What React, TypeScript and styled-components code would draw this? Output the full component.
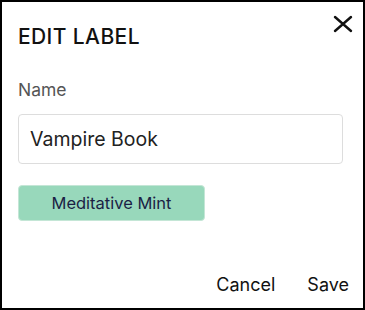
import styled, { createGlobalStyle } from "styled-components";

const GlobalStyle = createGlobalStyle`
  html, body {
    margin: 0;
    padding: 0;
    background: #ffffff;
  }
  * {
    box-sizing: border-box;
  }
`;

const Dialog = styled.div`
  position: relative;
  width: 365px;
  height: 310px;
  border: 2px solid #000000;
  background: #ffffff;
  font-family: Inter, "Noto Sans", sans-serif;
  padding: 22px 10px 8px 16px;
  display: flex;
  flex-direction: column;
`;

const Body = styled.div`
  display: flex;
  flex-direction: column;
  align-items: flex-start;
  padding-right: 10px;
`;

const Title = styled.h2`
  margin: 0;
  font-size: 21px;
  font-weight: 500;
  letter-spacing: 0.4px;
  line-height: 26px;
  color: #111111;
`;

const CloseButton = styled.button`
  position: absolute;
  top: 12px;
  right: 10px;
  width: 20px;
  height: 20px;
  padding: 0;
  border: none;
  background: none;
  cursor: pointer;
  display: flex;
  align-items: center;
  justify-content: center;
`;

const FieldLabel = styled.label`
  margin-top: 29px;
  font-size: 17.5px;
  line-height: 22px;
  color: #555555;
`;

const TextInput = styled.input`
  margin-top: 13px;
  height: 50px;
  width: 100%;
  border: 1px solid #dddddd;
  border-radius: 4px;
  padding: 0 11px;
  font-family: inherit;
  font-size: 19.5px;
  color: #222222;
  outline: none;
`;

const ColorChip = styled.button<{ $color: string }>`
  margin-top: 21px;
  width: 187px;
  height: 36px;
  border: 1px solid #c4e6d6;
  border-radius: 4px;
  background: ${(p) => p.$color};
  font-family: inherit;
  font-size: 16.5px;
  color: #1b1f45;
  cursor: pointer;
`;

const Actions = styled.div`
  margin-top: auto;
  display: flex;
  justify-content: flex-end;
  gap: 24px;
`;

const TextButton = styled.button`
  border: none;
  background: none;
  padding: 4px;
  font-family: inherit;
  font-size: 18px;
  line-height: 22px;
  color: #111111;
  cursor: pointer;
`;

export default function App() {
  return (
    <>
      <GlobalStyle />
      <Dialog>
        <CloseButton aria-label="Close">
          <svg width="20" height="20" viewBox="0 0 20 20">
            <path d="M2 3 L18 17 M18 3 L2 17" stroke="#111" strokeWidth="2.4" strokeLinecap="round" />
          </svg>
        </CloseButton>
        <Body>
          <Title>EDIT LABEL</Title>
          <FieldLabel>Name</FieldLabel>
          <TextInput defaultValue="Vampire Book" />
          <ColorChip $color="#98d8bb">Meditative Mint</ColorChip>
        </Body>
        <Actions>
          <TextButton>Cancel</TextButton>
          <TextButton>Save</TextButton>
        </Actions>
      </Dialog>
    </>
  );
}
